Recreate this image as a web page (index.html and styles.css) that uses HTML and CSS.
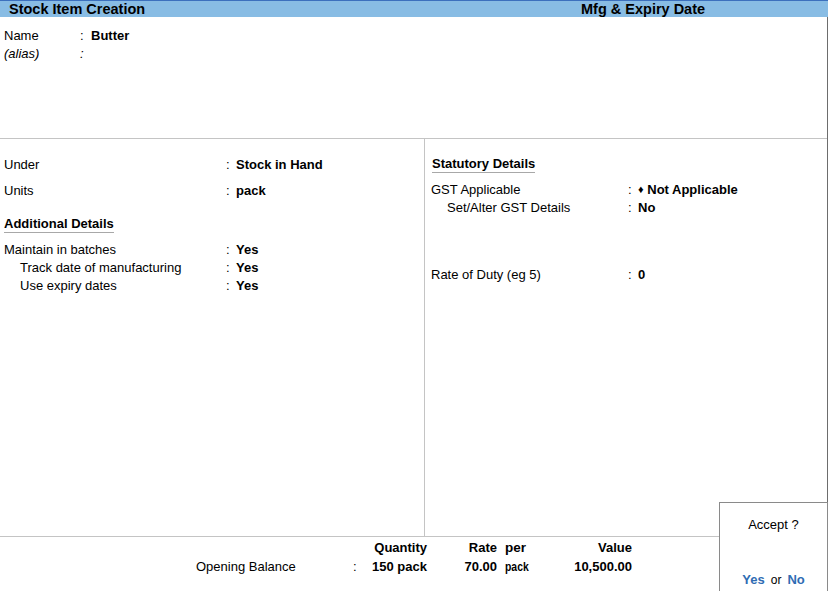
FILE: index.html
```html
<!DOCTYPE html>
<html>
<head>
<meta charset="utf-8">
<title>Stock Item Creation</title>
<link rel="stylesheet" href="styles.css">
</head>
<body>
<div class="screen">
  <div class="titlebar">
    <span class="title-left">Stock Item Creation</span>
    <span class="title-right">Mfg &amp; Expiry Date</span>
  </div>
  <div class="panel">
    <section class="name-area">
      <div class="name-row"><span>Name</span><span class="colon">:</span><span class="val">Butter</span></div>
      <div class="name-row"><span class="italic">(alias)</span><span class="colon italic">:</span><span></span></div>
    </section>
    <section class="details">
      <div class="col col-left">
        <div class="row"><span>Under</span><span class="colon">:</span><span class="val">Stock in Hand</span></div>
        <div class="row gap8"><span>Units</span><span class="colon">:</span><span class="val">pack</span></div>
        <div class="heading heading-left"><span>Additional Details</span></div>
        <div class="row gap8"><span>Maintain in batches</span><span class="colon">:</span><span class="val">Yes</span></div>
        <div class="row"><span class="sub">Track date of manufacturing</span><span class="colon">:</span><span class="val">Yes</span></div>
        <div class="row"><span class="sub">Use expiry dates</span><span class="colon">:</span><span class="val">Yes</span></div>
      </div>
      <div class="col col-right">
        <div class="heading heading-right"><span>Statutory Details</span></div>
        <div class="rrow gap7"><span>GST Applicable</span><span class="colon">:</span><span class="val"><span class="diamond">&#9830;</span> Not Applicable</span></div>
        <div class="rrow"><span class="sub">Set/Alter GST Details</span><span class="colon">:</span><span class="val">No</span></div>
        <div class="rrow gap49"><span>Rate of Duty (eg 5)</span><span class="colon">:</span><span class="val">0</span></div>
      </div>
    </section>
    <section class="opening">
      <div class="orow head">
        <span></span><span></span><span></span>
        <span class="num">Quantity</span>
        <span class="num">Rate</span>
        <span class="per">per</span>
        <span class="num">Value</span>
      </div>
      <div class="orow">
        <span></span>
        <span class="plain">Opening Balance</span>
        <span class="colon">:</span>
        <span class="num">150 pack</span>
        <span class="num">70.00</span>
        <span class="per"><span class="narrow">pack</span></span>
        <span class="num">10,500.00</span>
      </div>
    </section>
  </div>
  <div class="accept">
    <div class="accept-q">Accept ?</div>
    <div class="accept-opts"><span class="opt">Yes</span><span class="or">or</span><span class="opt">No</span></div>
  </div>
</div>
</body>
</html>
```
FILE: styles.css
```css
html, body {
  margin: 0;
  padding: 0;
  background: #ffffff;
}
body {
  font-family: "Liberation Sans", Arial, sans-serif;
  font-size: 13px;
  color: #000;
}
.screen {
  position: relative;
  width: 828px;
  height: 591px;
  overflow: hidden;
  background: #fff;
}
.titlebar {
  box-sizing: border-box;
  height: 17px;
  border-top: 1px solid #3c70bd;
  background: #88bce4;
  display: flex;
  align-items: center;
  font-weight: bold;
  font-size: 14.5px;
  line-height: 16px;
}
.title-left {
  flex: 1;
  padding-left: 9px;
}
.title-right {
  width: 247px;
}
.panel {
  box-sizing: border-box;
  width: 828px;
  height: 574px;
  border-right: 1px solid #6d6d6d;
  display: flex;
  flex-direction: column;
}
.name-area {
  height: 122px;
  box-sizing: border-box;
  padding: 10px 0 0 4px;
  border-bottom: 1px solid #c4c4c4;
}
.name-row {
  display: grid;
  grid-template-columns: 76px 11px auto;
  line-height: 18px;
}
.italic {
  font-style: italic;
}
.val {
  font-weight: bold;
}
.details {
  height: 398px;
  box-sizing: border-box;
  border-bottom: 1px solid #c4c4c4;
  display: flex;
}
.col {
  box-sizing: border-box;
}
.col-left {
  width: 425px;
  border-right: 1px solid #c4c4c4;
  padding: 17px 0 0 4px;
}
.col-right {
  flex: 1;
  padding: 17px 0 0 6px;
}
.row {
  display: grid;
  grid-template-columns: 222px 10px auto;
  line-height: 18px;
}
.rrow {
  display: grid;
  grid-template-columns: 197px 10px auto;
  line-height: 18px;
}
.sub {
  padding-left: 16px;
}
.gap8 {
  margin-top: 8px;
}
.gap7 {
  margin-top: 8px;
}
.gap49 {
  margin-top: 49px;
}
.heading {
  font-weight: bold;
  line-height: 16px;
}
.heading span {
  display: inline-block;
  border-bottom: 1px solid #a8a8a8;
}
.heading-left {
  margin-top: 16px;
}
.heading-right {
  padding-left: 1px;
}
.diamond {
  font-size: 11px;
  position: relative;
  top: -1px;
}
.opening {
  flex: 1;
  padding-top: 1px;
}
.orow {
  display: grid;
  grid-template-columns: 196px 157px 10px 64px 70px 38px 97px;
  line-height: 19px;
  font-weight: bold;
}
.orow .plain,
.orow .colon {
  font-weight: normal;
}
.num {
  text-align: right;
}
.per {
  padding-left: 8px;
}
.head .per {
  font-size: 13.5px;
}
.narrow {
  display: inline-block;
  transform: scaleX(0.8);
  transform-origin: left center;
}
.accept {
  position: absolute;
  left: 719px;
  top: 502px;
  width: 107px;
  height: 100px;
  border: 1px solid #8a8a8a;
  background: #fff;
  text-align: center;
}
.accept-q {
  margin-top: 13px;
  line-height: 18px;
}
.accept-opts {
  margin-top: 37px;
  line-height: 18px;
}
.opt {
  font-weight: bold;
  color: #2f6cb3;
}
.or {
  font-size: 12px;
  margin: 0 6px;
}
```
